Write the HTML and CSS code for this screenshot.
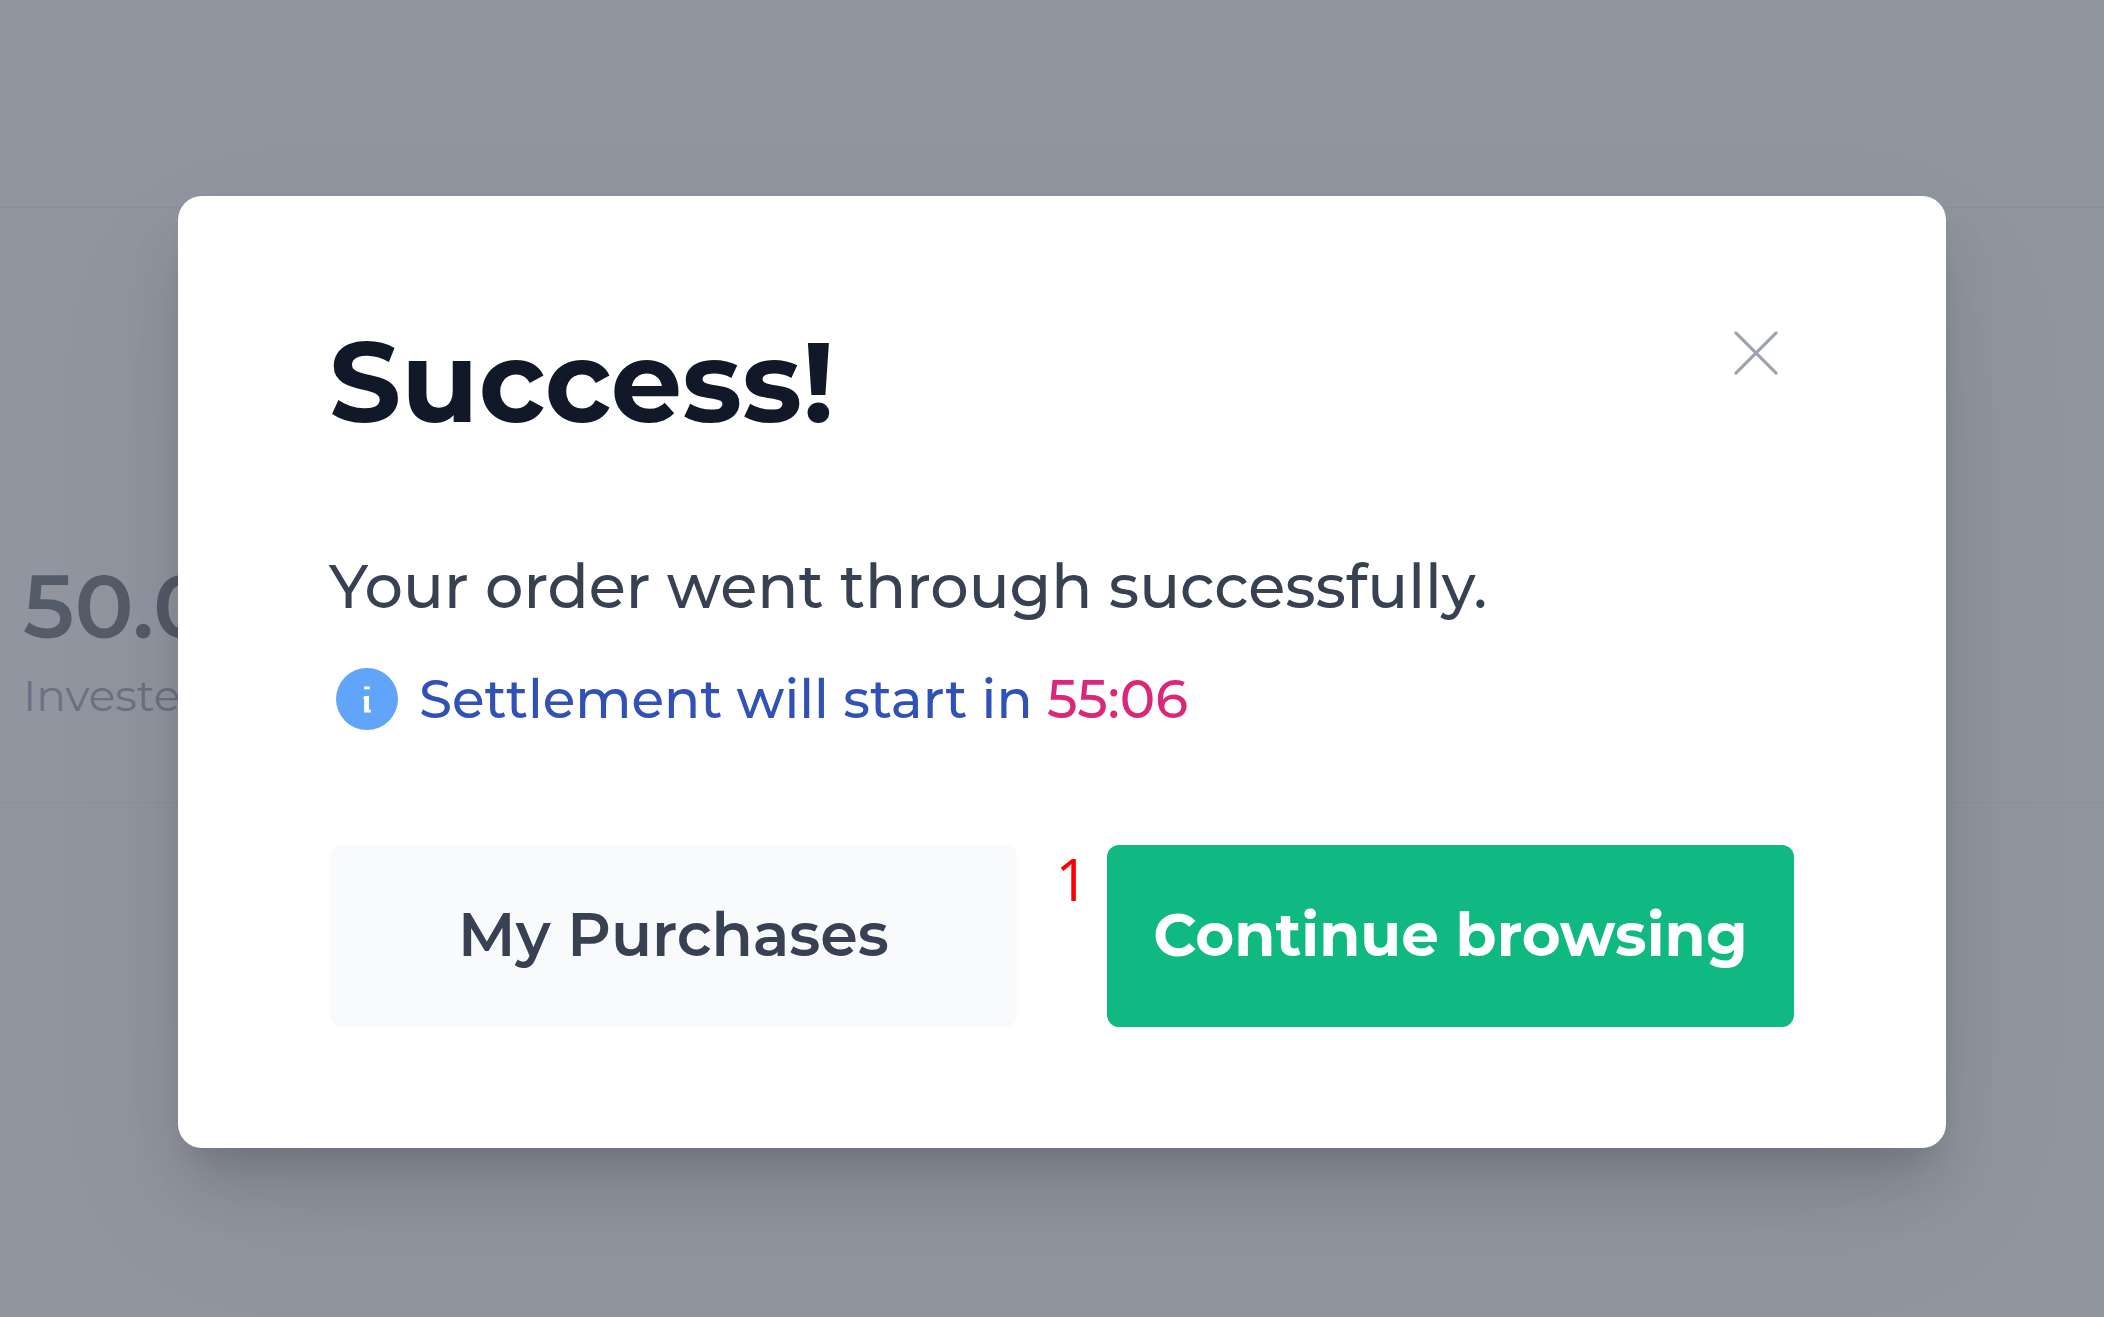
FILE: index.html
```html
<!DOCTYPE html>
<html lang="en">
  <head>
    <meta charset="UTF-8" />
    <title>Success</title>
    <link rel="stylesheet" href="styles.css">
  </head>
  <body>
    <!-- Page behind the overlay -->
    <div class="page">
      <div class="page-top"></div>
      <div class="stats">
        <div class="stat-value">50.00</div>
        <div class="stat-label">Invested</div>
      </div>
    </div>

    <div class="overlay">
      <div class="modal">
        <div class="modal-head">
          <h1>Success!</h1>
          <svg class="close" viewBox="0 0 24 24" fill="none" stroke="#9ca3af" stroke-width="1.600" stroke-linecap="round">
            <path d="M1.500 1.500L22.500 22.500M22.500 1.500L1.500 22.500" />
          </svg>
        </div>
        <p class="message">Your order went through successfully.</p>
        <div class="notice">
          <svg class="info" viewBox="0 0 32 32">
            <circle cx="16" cy="16" r="16" fill="#60a5fa" />
            <rect x="14.500" y="9.500" width="3" height="1.500" fill="#fff" />
            <path d="M14.500 14.500h2.500v7h1v1.500h-3.500v-7h-0.500z" fill="#fff" />
          </svg>
          <span>Settlement will start in <span class="timer">55:06</span></span>
        </div>
        <div class="actions">
          <button class="btn btn-light">My Purchases</button>
          <span class="count">1</span>
          <button class="btn btn-green">Continue browsing</button>
        </div>
      </div>
    </div>
  </body>
</html>
```

FILE: styles.css
```css
* {
  box-sizing: border-box;
}
html,
body {
  margin: 0;
  height: 100%;
}
body {
  width: 2104px;
  height: 1317px;
  overflow: hidden;
  position: relative;
  font-family: Montserrat, "Open Sans", "Noto Sans", sans-serif;
  background: #fff;
}
.page-top {
  height: 208px;
  border-bottom: 1px solid #e5e7eb;
}
.stats {
  height: 595px;
  padding: 345px 0 0 23px;
  border-bottom: 1px solid #e5e7eb;
}
.stat-value {
  font-size: 88px;
  font-weight: 600;
  line-height: 108px;
  color: #111827;
}
.stat-label {
  margin-top: 4px;
  font-size: 44px;
  line-height: 60px;
  color: #6b7280;
}
.overlay {
  position: absolute;
  inset: 0;
  background: rgba(107, 114, 128, 0.75);
}
.modal {
  position: absolute;
  left: 178px;
  top: 196px;
  width: 1768px;
  height: 952px;
  padding: 131px 151px 0;
  background: #fff;
  border-radius: 24px;
  box-shadow: 0 40px 60px -10px rgba(0, 0, 0, 0.15), 0 20px 24px -10px rgba(0, 0, 0, 0.06), 0 60px 160px rgba(0, 0, 0, 0.06);
}
.modal-head {
  display: flex;
  justify-content: space-between;
  align-items: flex-start;
}
h1 {
  margin: 0;
  font-size: 113px;
  line-height: 110px;
  font-weight: 700;
  color: #111827;
}
.close {
  width: 46px;
  height: 46px;
  margin: 3px 16px 0 0;
}
.message {
  margin: 113px 0 0;
  font-size: 60.500px;
  line-height: 72px;
  font-weight: 500;
  color: #374151;
}
.notice {
  display: flex;
  align-items: center;
  gap: 21px;
  margin-top: 45px;
  padding-left: 7px;
  font-size: 53.200px;
  font-weight: 500;
  color: #3151b7;
}
.info {
  width: 62px;
  height: 62px;
}
.timer {
  color: #db2777;
}
.actions {
  display: flex;
  margin: 114px 0 0 1px;
  align-items: flex-start;
}
.btn {
  width: 687px;
  height: 182px;
  padding-bottom: 5px;
  border: none;
  border-radius: 12px;
  font-family: inherit;
}
.btn-light {
  background: #f9fafb;
  color: #374151;
  font-size: 60.300px;
  font-weight: 600;
}
.btn-green {
  background: #10b981;
  color: #fff;
  font-size: 59.500px;
  font-weight: 700;
}
.count {
  width: 90px;
  padding-left: 20px;
  text-align: center;
  font-family: "Open Sans", sans-serif;
  font-size: 58px;
  line-height: 68px;
  color: #f00;
}
```
